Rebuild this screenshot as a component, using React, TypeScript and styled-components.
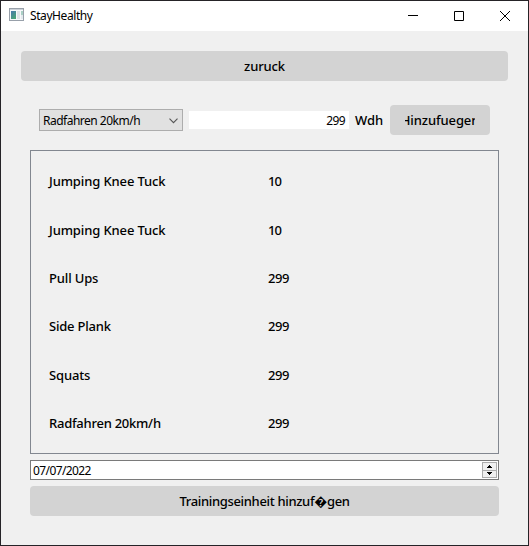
import React from "react";
import styled, { createGlobalStyle } from "styled-components";

const GlobalStyle = createGlobalStyle`
  * { box-sizing: border-box; }
  body { margin: 0; background: #f0f0f0; overflow: hidden; }
  button, input { margin: 0; padding: 0; border: 0; color: #000; }
`;

const Window = styled.main`
  width: 529px;
  height: 546px;
  display: flex;
  flex-direction: column;
  border: 1px solid #252327;
  background: #f0f0f0;
  color: #000;
  font: 500 13px/18px "Noto Sans", sans-serif;
  white-space: nowrap;
`;

const TitleBar = styled.header`
  height: 30px;
  flex: none;
  display: flex;
  align-items: center;
  padding-left: 8px;
  background: #fff;
`;

const Title = styled.span`
  flex: 1;
  margin-left: 6px;
  font: 400 12px/16px "Noto Sans", sans-serif;
  letter-spacing: -0.42px;
`;

const Caption = styled.div`
  width: 46px;
  height: 30px;
  display: flex;
  align-items: center;
  justify-content: center;
`;

const Content = styled.div`
  padding: 20px 20px 0;
`;

const Text = styled.span<{ $track?: number }>`
  letter-spacing: ${(p) => p.$track ?? 0}px;
`;

const Button = styled.button<{ $width?: number }>`
  width: ${(p) => (p.$width ? `${p.$width}px` : "100%")};
  height: 30px;
  display: flex;
  align-items: center;
  justify-content: center;
  border-radius: 4px;
  background: #d3d3d3;
  font: inherit;
`;

const Clip = styled.span`
  width: 70px;
  display: flex;
  justify-content: center;
  overflow: hidden;
`;

const EntryRow = styled.div`
  display: flex;
  align-items: center;
  height: 30px;
  margin: 24px 0 15px 18px;
`;

const Select = styled.div`
  width: 144px;
  height: 22px;
  display: flex;
  align-items: center;
  justify-content: space-between;
  padding: 0 4px 0 3px;
  border: 1px solid #adadad;
  background: #e1e1e1;
  font-size: 12px;
  font-weight: 400;
  line-height: 16px;

  span { padding-top: 2px; }
  svg { margin-top: 2px; }
`;

const Amount = styled.div`
  width: 160px;
  height: 18px;
  margin: 0 6px;
  padding: 1px 4px 0 0;
  background: #fff;
  text-align: right;
  font-size: 12px;
  font-weight: 400;
  letter-spacing: -0.6px;
`;

const Unit = styled.span`
  width: 35px;
`;

const Panel = styled.div`
  padding: 0 9px;
`;

const List = styled.div`
  height: 304px;
  padding: 6px 18px;
  border: 1px solid #828790;
  display: grid;
  grid-template-columns: 219px 1fr;
  grid-auto-rows: 48.4px;
  align-items: center;
`;

const DateField = styled.div`
  height: 20px;
  display: flex;
  align-items: center;
  justify-content: space-between;
  margin: 6px 0;
  padding: 0 1px 0 2px;
  border: 1px solid #7a7a7a;
  background: #fff;
  font-size: 12px;
  font-weight: 400;
  line-height: 16px;

  span { padding-top: 2px; }
`;

const Stepper = styled.div`
  width: 15px;
  height: 16px;
  display: grid;
  grid-template-rows: 8px 6px;
  border: 1px solid #acacac;
  background: #f0f0f0;

  svg { display: block; }
  svg:first-child { border-bottom: 1px solid #acacac; }
`;

const exercises = [
  { name: "Jumping Knee Tuck", amount: 10, track: -0.12 },
  { name: "Jumping Knee Tuck", amount: 10, track: -0.12 },
  { name: "Pull Ups", amount: 299, track: -0.15 },
  { name: "Side Plank", amount: 299, track: -0.2 },
  { name: "Squats", amount: 299, track: -0.15 },
  { name: "Radfahren 20km/h", amount: 299, track: -0.25 },
];

const AppIcon = () => (
  <svg width="15" height="13" viewBox="0 0 15 13" shapeRendering="crispEdges">
    <defs>
      <linearGradient id="screen" x1="0" y1="0" x2="0.6" y2="1">
        <stop offset="0" stopColor="#4878ad" />
        <stop offset="1" stopColor="#4aa377" />
      </linearGradient>
    </defs>
    <path d="M.5.5h14v12H.5z" fill="#f7f8fa" stroke="#98a0aa" />
    <path d="M1 1h13v1H1z" fill="#cbd1d8" />
    <path d="M2 3h5v8H2z" fill="url(#screen)" />
    <path d="M8 3h3v8H8z" fill="#dfe3e6" />
    <path d="M12 3h2v4h-2z" fill="#a9cfc4" />
    <path d="M12 7h2v4h-2z" fill="#e3e9ed" />
  </svg>
);

const IconSlot = styled.span`
  display: flex;
  padding-bottom: 3px;
`;

export default function App() {
  return (
    <>
      <GlobalStyle />
      <Window>
        <TitleBar>
          <IconSlot><AppIcon /></IconSlot>
          <Title>StayHealthy</Title>
          <Caption>
            <svg width="10" height="10"><path d="M0 4.5h10" stroke="#000" /></svg>
          </Caption>
          <Caption>
            <svg width="10" height="10"><path d="M.5.5h9v9h-9z" fill="none" stroke="#000" /></svg>
          </Caption>
          <Caption>
            <svg width="10" height="10"><path d="M0 0l10 10M10 0L0 10" stroke="#000" /></svg>
          </Caption>
        </TitleBar>
        <Content>
          <Button $width={487}><Text $track={-0.15}>zuruck</Text></Button>
          <EntryRow>
            <Select>
              <Text $track={-0.5}>Radfahren 20km/h</Text>
              <svg width="9" height="6"><path d="M.5.7l4 4 4-4" fill="none" stroke="#555" strokeWidth="1.1" /></svg>
            </Select>
            <Amount>299</Amount>
            <Unit><Text>Wdh</Text></Unit>
            <Button $width={100}><Clip><Text $track={-0.1}>Hinzufuegen</Text></Clip></Button>
          </EntryRow>
          <Panel>
            <List>
              {exercises.map((item, i) => (
                <React.Fragment key={i}>
                  <Text $track={item.track}>{item.name}</Text>
                  <Text $track={item.amount === 10 ? -0.9 : -0.4}>{item.amount}</Text>
                </React.Fragment>
              ))}
            </List>
            <DateField>
              <Text $track={-0.6}>07/07/2022</Text>
              <Stepper>
                <svg width="13" height="8" shapeRendering="crispEdges">
                  <path d="M6 2h1v1H6zM5 3h3v1H5zM4 4h5v1H4z" />
                </svg>
                <svg width="13" height="6" shapeRendering="crispEdges">
                  <path d="M4 1h5v1H4zM5 2h3v1H5zM6 3h1v1H6z" />
                </svg>
              </Stepper>
            </DateField>
            <Button $width={469}><Text $track={-0.33}>Trainingseinheit hinzuf�gen</Text></Button>
          </Panel>
        </Content>
      </Window>
    </>
  );
}
